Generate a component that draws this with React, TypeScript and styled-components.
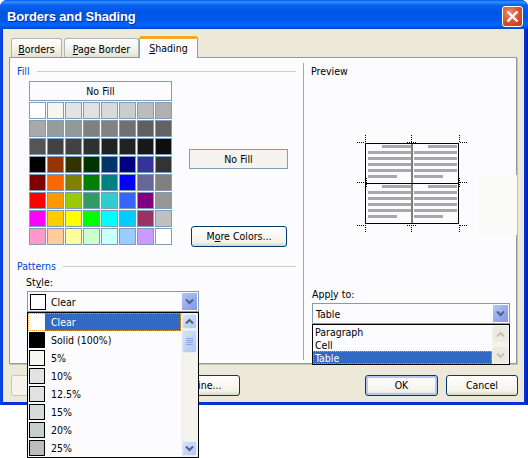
import React from 'react'
import styled, { createGlobalStyle, css } from 'styled-components'

const GRID = [
  '#ffffff', '#f5f6f2', '#e2e3e3', '#e0e2e1', '#d8d9d9', '#c6cfcb', '#bbbcbc', '#afb1b1',
  '#a8a8a8', '#969c9c', '#919999', '#808080', '#828282', '#707070', '#606060', '#626262',
  '#555555', '#424242', '#424242', '#303030', '#222222', '#222222', '#181818', '#0e0e0e',
  '#000000', '#993300', '#333300', '#003300', '#003366', '#000080', '#333399', '#333333',
  '#800000', '#ff6600', '#808000', '#008000', '#008080', '#0000ff', '#666699', '#808080',
  '#ff0000', '#ff9900', '#99cc00', '#339966', '#33cccc', '#3366ff', '#800080', '#969696',
  '#ff00ff', '#ffcc00', '#ffff00', '#00ff00', '#00ffff', '#00ccff', '#993366', '#c0c0c0',
  '#ff99cc', '#ffcc99', '#ffff99', '#ccffcc', '#ccffff', '#99ccff', '#cc99ff', '#ffffff',
]

const STYLES = [
  ['Clear', '#ffffff'],
  ['Solid (100%)', '#000000'],
  ['5%', '#f5f6f2'],
  ['10%', '#e2e3e3'],
  ['12.5%', '#e0e2e1'],
  ['15%', '#d8d9d9'],
  ['20%', '#c6cfcb'],
  ['25%', '#bbbcbc'],
]

const UI_FONT = '"DejaVu Sans Condensed", "DejaVu Sans", sans-serif'

const Global = createGlobalStyle`
  html, body { margin: 0; padding: 0; background: #fff; }
  body { width: 528px; height: 458px; overflow: hidden; font-family: ${UI_FONT}; font-size: 10.5px; color: #000; }
  * { box-sizing: border-box; }
`

const Chevron = ({ color = '#4d6185' }: { color?: string }) => (
  <svg width="9" height="7" viewBox="0 0 9 7">
    <path d="M1 1.5 L4.5 5 L8 1.5" fill="none" stroke={color} strokeWidth="2" />
  </svg>
)

const ChevronUp = ({ color = '#4d6185' }: { color?: string }) => (
  <svg width="9" height="7" viewBox="0 0 9 7">
    <path d="M1 5.5 L4.5 2 L8 5.5" fill="none" stroke={color} strokeWidth="2" />
  </svg>
)

const PreviewTable = () => {
  const cell = (x: number, y: number) => (
    <g key={`${x}-${y}`} fill="#a8a8a8">
      <rect x={x + 16} y={y + 1} width={29} height={3} />
      {[7, 13, 19, 25].map(d => <rect key={d} x={x + 2} y={y + d} width={43} height={3} />)}
      <rect x={x + 2} y={y + 31} width={29} height={3} />
    </g>
  )
  return (
    <svg width="112" height="98" viewBox="0 0 112 98" style={{ display: 'block' }}>
      {cell(9, 9)}
      {cell(55, 9)}
      {cell(9, 49)}
      {cell(55, 49)}
      <rect x="8.5" y="8.5" width="93" height="80" fill="none" stroke="#000" />
      <path d="M55 8.5V88.5M8.5 48.5H101.5" stroke="#000" fill="none" />
      <g stroke="#000" strokeDasharray="1 1" fill="none">
        <path d="M0 7.5H8M103 7.5H111M0 47.5H9M103 47.5H111M0 90.5H8M103 90.5H111" />
        <path d="M50 7.5H59M50 90.5H59" />
        <path d="M8.5 0V8M54.5 0V8M102.5 0V8M8.5 90V98M54.5 90V98M102.5 90V98" />
        <path d="M9.5 43V53M102.5 43V53" />
      </g>
    </svg>
  )
}

export default function App() {
  return (
    <>
      <Global />
      <Win>
        <TitleBar>
          <TitleText>Borders and Shading</TitleText>
          <CloseBtn>
            <svg width="13" height="13" viewBox="0 0 13 13">
              <path d="M1.5 1.5 L11.5 11.5 M11.5 1.5 L1.5 11.5" stroke="#fff" strokeWidth="2.4" />
            </svg>
          </CloseBtn>
        </TitleBar>
        <Client>
          <Tabs>
            <Tab $w={51}><u>B</u>orders</Tab>
            <Tab $w={75}><u>P</u>age Border</Tab>
            <Tab $w={59} $active><u>S</u>hading</Tab>
          </Tabs>
          <Sheet>
            <LeftPane>
              <Legend $blue>Fill<LegendRule /></Legend>
              <FillRow>
                <Palette>
                  <NoFillCell>No Fill</NoFillCell>
                  <Swatches>
                    {GRID.map((c, i) => <Swatch key={i} $c={c} />)}
                  </Swatches>
                </Palette>
                <FillSide>
                  <NoFillLabel>No Fill</NoFillLabel>
                  <MoreBtn>M<u>o</u>re Colors...</MoreBtn>
                </FillSide>
              </FillRow>
              <Legend $blue $patterns>Patterns<LegendRule /></Legend>
              <FieldLabel>St<u>y</u>le:</FieldLabel>
              <DropWrap>
                <Combo $w={172}>
                  <SmallBox $c="#fff" />
                  <span>Clear</span>
                  <ComboArrow><Chevron /></ComboArrow>
                </Combo>
                <StyleList>
                  <StyleRows>
                    {STYLES.map(([name, c], i) => (
                      <StyleRow key={name} $sel={i === 0}>
                        <SmallBox $c={c} $bare={i === 0} />
                        <StyleName $sel={i === 0}>{name}</StyleName>
                      </StyleRow>
                    ))}
                  </StyleRows>
                  <ScrollTrack>
                    <ScrollBtn><ChevronUp /></ScrollBtn>
                    <Thumb><Grip /><Grip /><Grip /><Grip /></Thumb>
                    <TrackFill />
                    <ScrollBtn><Chevron /></ScrollBtn>
                  </ScrollTrack>
                </StyleList>
              </DropWrap>
            </LeftPane>
            <RightPane>
              <Legend>Preview</Legend>
              <PreviewBox><PreviewTable /></PreviewBox>
              <FieldLabel $right>App<u>l</u>y to:</FieldLabel>
              <DropWrap>
                <Combo $w={198} $plain>
                  <span>Table</span>
                  <ComboArrow><Chevron /></ComboArrow>
                </Combo>
                <ApplyList>
                  <ApplyRows>
                    <ApplyRow>Paragraph</ApplyRow>
                    <ApplyRow>Cell</ApplyRow>
                    <ApplyRow $sel>Table</ApplyRow>
                  </ApplyRows>
                  <ApplyScroll>
                    <DisabledBtn><ChevronUp color="#c3c1b4" /></DisabledBtn>
                    <DisabledBtn><Chevron color="#c3c1b4" /></DisabledBtn>
                  </ApplyScroll>
                </ApplyList>
              </DropWrap>
              <FaintPatch />
            </RightPane>
          </Sheet>
          <Footer>
            <DisabledFoot />
            <FootBtn $w={117}>Horizontal Line...</FootBtn>
            <Spacer />
            <FootBtn $w={73} $default>OK</FootBtn>
            <FootBtn $w={72}>Cancel</FootBtn>
          </Footer>
        </Client>
      </Win>
    </>
  )
}

const Win = styled.div`
  width: 528px;
  height: 405px;
  border-radius: 7px 7px 0 0;
  display: flex;
  flex-direction: column;
  padding: 0 4px 3px 3px;
  position: relative;
  background: linear-gradient(90deg, #0a4fe8 0, #0831d9 3px, #0831d9 525px, #001ea0 528px);
`

const TitleBar = styled.div`
  height: 29px;
  margin: 0 -4px 0 -3px;
  padding: 3px 5px 0 7px;
  border-radius: 7px 7px 0 0;
  background: linear-gradient(180deg, #0058ee 0, #3593ff 2px, #0a61f0 5px, #0055e5 12px, #0058ea 20px, #0064ff 25px, #0047d0 29px);
  display: flex;
  align-items: center;
  justify-content: space-between;
`

const TitleText = styled.div`
  font-family: "Liberation Sans", Arial, sans-serif;
  font-weight: 700;
  font-size: 13px;
  letter-spacing: -0.15px;
  color: #fff;
  text-shadow: 1px 1px 0 #0f2a90;
`

const CloseBtn = styled.div`
  width: 21px;
  height: 21px;
  border: 1px solid #fff;
  border-radius: 3px;
  background: radial-gradient(circle at 35% 30%, #e98a6c, #da4a25 60%, #c93a17);
  display: flex;
  align-items: center;
  justify-content: center;
`

const Client = styled.div`
  flex: 1;
  background: #ece9d8;
  padding: 7px 5px 0 6px;
  display: flex;
  flex-direction: column;
`

const Tabs = styled.div`
  display: flex;
  height: 21px;
  padding-left: 2px;
  align-items: flex-end;
  position: relative;
  z-index: 1;
`

const Tab = styled.div<{ $w: number; $active?: boolean }>`
  width: ${({ $w }) => $w}px;
  height: 19px;
  padding-top: 4px;
  margin-right: 2px;
  text-align: center;
  background: linear-gradient(180deg, #ffffff, #f0eee2 70%, #e4e1d2);
  border: 1px solid #a9b6bd;
  border-bottom: none;
  border-radius: 3px 3px 0 0;
  line-height: 13px;
  ${({ $active }) => $active && css`
    height: 22px;
    margin: 0 0 -1px -2px;
    padding-top: 3px;
    background: #fcfcfe;
    border-color: #919b9c;
    border-top: 3px solid #f5a623;
  `}
`

const Sheet = styled.div`
  width: 508px;
  height: 307px;
  background: #fcfcfe;
  border: 1px solid #919b9c;
  box-shadow: 1px 1px 0 #c4c1b0;
  display: flex;
`

const LeftPane = styled.div`
  width: 293px;
  padding: 6px 7px 0;
`

const RightPane = styled.div`
  width: 213px;
  margin-top: 5px;
  height: 297px;
  border-left: 1px solid #aca899;
  padding: 1px 0 0 7px;
  position: relative;
`

const FaintPatch = styled.div`
  position: absolute;
  left: 175px;
  top: 112px;
  width: 38px;
  height: 60px;
  background: #fafaf8;
`

const Legend = styled.div<{ $blue?: boolean; $patterns?: boolean }>`
  height: 14px;
  line-height: 14px;
  display: flex;
  align-items: center;
  color: ${({ $blue }) => ($blue ? '#0046d5' : '#000')};
  margin-top: ${({ $patterns }) => ($patterns ? '14px' : '0')};
`

const LegendRule = styled.div`
  flex: 1;
  height: 1px;
  margin-left: 7px;
  background: #d0d0bf;
`

const FillRow = styled.div`
  display: flex;
  height: 164px;
  margin-top: 3px;
  padding-left: 12px;
`

const Palette = styled.div`
  width: 143px;
`

const NoFillCell = styled.div`
  height: 20px;
  border: 1px solid #7f9db9;
  background: #fcfcfe;
  text-align: center;
  line-height: 18px;
`

const Swatches = styled.div`
  display: grid;
  grid-template-columns: repeat(8, 17px);
  grid-auto-rows: 17px;
  gap: 1px;
  margin-top: 1px;
`

const Swatch = styled.div<{ $c: string }>`
  border: 1px solid #7f9db9;
  background: ${({ $c }) => $c};
`

const FillSide = styled.div`
  margin-left: 17px;
  width: 99px;
  display: flex;
  flex-direction: column;
  align-items: flex-start;
`

const NoFillLabel = styled.div`
  margin-top: 68px;
  width: 99px;
  height: 20px;
  flex: none;
  border: 1px solid #7f9db9;
  background: #f5f4f0;
  text-align: center;
  line-height: 18px;
`

const MoreBtn = styled.div`
  margin-top: 57px;
  margin-left: 2px;
  width: 96px;
  height: 21px;
  flex: none;
  border: 1px solid #003c74;
  border-radius: 3px;
  background: linear-gradient(180deg, #fff, #f3f2ea 80%, #d8d4c4);
  text-align: center;
  line-height: 19px;
`

const FieldLabel = styled.div<{ $right?: boolean }>`
  height: 13px;
  line-height: 13px;
  margin-left: ${({ $right }) => ($right ? '1px' : '9px')};
  margin-top: ${({ $right }) => ($right ? '1px' : '3px')};
  margin-bottom: ${({ $right }) => ($right ? '1px' : '0')};
`

const DropWrap = styled.div`
  position: relative;
  margin-top: 2px;
`

const Combo = styled.div<{ $w: number; $plain?: boolean }>`
  width: ${({ $w }) => $w}px;
  height: 21px;
  margin-left: ${({ $plain }) => ($plain ? '1px' : '10px')};
  border: 1px solid #7f9db9;
  background: #fcfcfe;
  display: flex;
  align-items: center;
  padding-left: ${({ $plain }) => ($plain ? '3px' : '2px')};
  gap: 5px;
  position: relative;
`

const ComboArrow = styled.div`
  position: absolute;
  right: 1px;
  top: 1px;
  width: 15px;
  height: 17px;
  background: linear-gradient(135deg, #b5c5f5, #7f97e6);
  display: flex;
  align-items: center;
  justify-content: center;
`

const SmallBox = styled.div<{ $c: string; $bare?: boolean }>`
  width: 16px;
  height: 16px;
  flex: none;
  border: ${({ $bare }) => ($bare ? 'none' : '1px solid #000')};
  background: ${({ $c }) => $c};
`

const StyleList = styled.div`
  position: absolute;
  left: 10px;
  top: 21px;
  width: 172px;
  height: 146px;
  background: #fcfcfe;
  border: 1px solid #000;
  display: flex;
  z-index: 5;
`

const StyleRows = styled.div`
  flex: 1;
  display: flex;
  flex-direction: column;
`

const StyleRow = styled.div<{ $sel?: boolean }>`
  height: 18px;
  display: flex;
  align-items: center;
  padding-left: 1px;
  gap: 0;
  position: relative;
  ${({ $sel }) => $sel && css`
    &::after {
      content: '';
      position: absolute;
      inset: 0;
      border: 1px dotted #f0a030;
    }
  `}
`

const StyleName = styled.div<{ $sel?: boolean }>`
  flex: 1;
  height: 18px;
  line-height: 18px;
  padding-left: 6px;
  ${({ $sel }) => $sel && css`
    background: #316ac5;
    color: #fff;
  `}
`

const ScrollTrack = styled.div`
  width: 17px;
  background: #f4f3ee;
  display: flex;
  flex-direction: column;
`

const ScrollBtn = styled.div`
  width: 15px;
  height: 15px;
  margin: 1px;
  border: 1px solid #e3ebfb;
  border-radius: 2px;
  background: linear-gradient(135deg, #d6e2fb, #b3c6f3);
  display: flex;
  align-items: center;
  justify-content: center;
  flex: none;
`

const Thumb = styled(ScrollBtn)`
  height: 23px;
  margin-top: 0;
  flex-direction: column;
  gap: 1px;
`

const Grip = styled.div`
  width: 7px;
  height: 1px;
  background: #8ea5e0;
`

const TrackFill = styled.div`
  flex: 1;
`

const PreviewBox = styled.div`
  height: 209px;
  padding: 57px 0 0 46px;
`

const ApplyList = styled.div`
  position: absolute;
  left: 1px;
  top: 21px;
  width: 198px;
  height: 41px;
  border: 1px solid #000;
  background: #fcfcfe;
  display: flex;
  z-index: 5;
`

const ApplyRows = styled.div`
  flex: 1;
`

const ApplyRow = styled.div<{ $sel?: boolean }>`
  height: 13px;
  line-height: 15px;
  padding-left: 2px;
  ${({ $sel }) => $sel && css`
    background: #316ac5;
    color: #fff;
    outline: 1px dotted #f0a030;
    outline-offset: -1px;
  `}
`

const ApplyScroll = styled.div`
  width: 17px;
  background: #f4f3ee;
  display: flex;
  flex-direction: column;
  justify-content: space-between;
`

const DisabledBtn = styled.div`
  height: 16px;
  margin: 1px;
  border-radius: 2px;
  background: #ecebe2;
  display: flex;
  align-items: center;
  justify-content: center;
`

const Footer = styled.div`
  display: flex;
  gap: 8px;
  margin-top: 11px;
  padding-right: 1px;
`

const DisabledFoot = styled.div`
  width: 100px;
  height: 21px;
  margin-left: 2px;
  margin-right: 4px;
  border: 1px solid #c9c7ba;
  border-radius: 3px;
  background: #f4f3ee;
`

const FootBtn = styled.div<{ $w: number; $default?: boolean }>`
  width: ${({ $w }) => $w}px;
  height: 21px;
  border: 1px solid #003c74;
  border-radius: 3px;
  background: linear-gradient(180deg, #fff, #f3f2ea 80%, #dcd8c8);
  text-align: center;
  line-height: 19px;
  white-space: nowrap;
  ${({ $default }) => $default && css`
    box-shadow: inset 0 0 0 2px #b6c8f0;
  `}
`

const Spacer = styled.div`
  flex: 1;
`
